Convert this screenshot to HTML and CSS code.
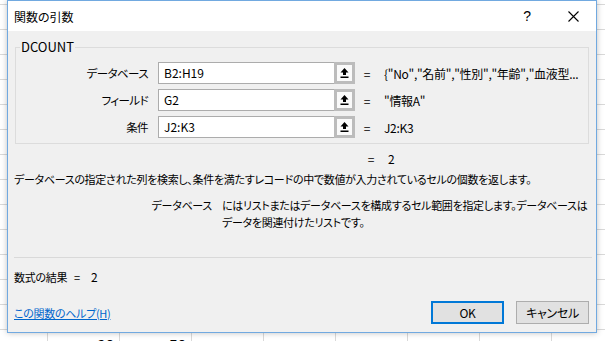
FILE: index.html
```html
<!DOCTYPE html>
<html lang="ja">
<head>
  <meta charset="UTF-8" />
  <title>関数の引数</title>
  <link rel="stylesheet" href="styles.css">
</head>
<body>

<div class="window">
  <div class="titlebar">
    <span class="title">関数の引数</span>
    <span class="caption-btn help">?</span>
    <span class="caption-btn close">
      <svg width="11" height="11" viewBox="0 0 11 11"><path d="M0.5 0.5 L10.5 10.5 M10.5 0.5 L0.5 10.5" stroke="#000" stroke-width="1.1" fill="none"/></svg>
    </span>
  </div>

  <div class="content">
    <fieldset class="args">
      <legend>DCOUNT</legend>

      <div class="arg-row">
        <label>データベース</label>
        <div class="ref-input">B2:H19</div>
        <span class="ref-btn"><svg width="9" height="10" viewBox="0 0 9 10"><path d="M4.5 0 L8.5 4.5 L6 4.5 L6 7 L3 7 L3 4.5 L0.5 4.5 Z M0.5 8.5 L8.5 8.5 L8.5 10 L0.5 10 Z" fill="#000"/></svg></span>
        <span class="eq">=</span>
        <span class="val">{"No","名前","性別","年齢","血液型...</span>
      </div>

      <div class="arg-row">
        <label>フィールド</label>
        <div class="ref-input">G2</div>
        <span class="ref-btn"><svg width="9" height="10" viewBox="0 0 9 10"><path d="M4.5 0 L8.5 4.5 L6 4.5 L6 7 L3 7 L3 4.5 L0.5 4.5 Z M0.5 8.5 L8.5 8.5 L8.5 10 L0.5 10 Z" fill="#000"/></svg></span>
        <span class="eq">=</span>
        <span class="val">"情報A"</span>
      </div>

      <div class="arg-row">
        <label>条件</label>
        <div class="ref-input">J2:K3</div>
        <span class="ref-btn"><svg width="9" height="10" viewBox="0 0 9 10"><path d="M4.5 0 L8.5 4.5 L6 4.5 L6 7 L3 7 L3 4.5 L0.5 4.5 Z M0.5 8.5 L8.5 8.5 L8.5 10 L0.5 10 Z" fill="#000"/></svg></span>
        <span class="eq">=</span>
        <span class="val">J2:K3</span>
      </div>
    </fieldset>

    <div class="total"><span class="eq">=</span><span class="val">2</span></div>

    <p class="desc">データベースの指定された列を検索し、条件を満たすレコードの中で数値が入力されているセルの個数を返します。</p>

    <div class="arg-help">
      <span class="arg-name">データベース</span>
      <span class="arg-text">にはリストまたはデータベースを構成するセル範囲を指定します。データベースは<br>データを関連付けたリストです。</span>
    </div>

    <hr class="sep">

    <div class="result">数式の結果<span class="result-eq">=</span><span class="result-val">2</span></div>

    <div class="footer">
      <a href="#" class="help-link">この関数のヘルプ(H)</a>
      <div class="buttons">
        <button class="btn ok">OK</button>
        <button class="btn">キャンセル</button>
      </div>
    </div>
  </div>
</div>

<div class="sheet-row">
  <span class="cell">90</span>
  <span class="cell">50</span>
  <span class="cell"></span>
  <span class="cell"></span>
  <span class="cell"></span>
  <span class="cell"></span>
  <span class="cell"></span>
</div>

</body>
</html>
```

FILE: styles.css
```css
body {
  margin: 0;
  height: 341px;
  overflow: hidden;
  font-family: "Noto Sans CJK JP", sans-serif;
  font-feature-settings: "palt";
  font-size: 11px;
  letter-spacing: -0.3px;
  color: #000;
  background:
    repeating-linear-gradient(to right, transparent 0 47px, #d9d9d9 47px 48px, transparent 48px 72px),
    repeating-linear-gradient(to bottom, #fff 0 4px, #d9d9d9 4px 5px, #fff 5px 25px);
}

.window {
  box-sizing: border-box;
  width: 590px;
  height: 333px;
  margin-left: 7px;
  border: 1px solid #71a9e0;
  background: #f0f0f0;
  box-shadow: 0 0 6px rgba(0, 0, 0, 0.25);
}

.titlebar {
  display: flex;
  align-items: center;
  height: 30px;
  background: #fff;
}

.title {
  flex: 1;
  padding-left: 6px;
  font-size: 12px;
  letter-spacing: 0;
}

.caption-btn {
  display: flex;
  align-items: center;
  justify-content: center;
  width: 46px;
  height: 30px;
  font-size: 14px;
  font-family: "Liberation Sans", sans-serif;
}

.content {
  padding: 0 4px 0 6px;
}

.args {
  margin: 8px 3px 0 1px;
  padding: 7px 0 5px 0;
  border: 1px solid #dcdcdc;
}

.args legend {
  margin-left: 4px;
  padding: 0 1px;
  font-size: 13px;
  letter-spacing: 0;
  line-height: 16px;
}

.arg-row {
  display: flex;
  align-items: center;
  height: 22px;
  margin-bottom: 5px;
  font-size: 12px;
}

.arg-row:last-child {
  margin-bottom: 0;
}

.arg-row label {
  width: 132px;
  margin-right: 10px;
  text-align: right;
  font-size: 11.5px;
  letter-spacing: -0.6px;
}

.ref-input {
  box-sizing: border-box;
  width: 177px;
  height: 22px;
  padding-left: 5px;
  line-height: 20px;
  letter-spacing: 0;
  border: 1px solid #acacac;
  background: #fff;
}

.ref-btn {
  box-sizing: border-box;
  display: flex;
  align-items: center;
  justify-content: center;
  width: 21px;
  height: 22px;
  margin-left: -1px;
  border: 3px solid #bcbcbc;
  background: #fafafa;
}

.eq {
  display: inline-block;
  width: 18px;
  margin-left: 3px;
  text-align: center;
}

.val {
  margin-left: 8px;
  white-space: nowrap;
}

.total {
  margin: 6px 0 0 345px;
  line-height: 17px;
  font-size: 12px;
}

.desc {
  margin: 4px 0 0;
  line-height: 17px;
  white-space: nowrap;
}

.arg-help {
  display: flex;
  margin-top: 9px;
  line-height: 17px;
}

.arg-name {
  width: 198px;
  flex: none;
  text-align: right;
  margin-right: 10px;
}

.arg-text {
  white-space: nowrap;
}

.sep {
  margin: 26px 0 0;
  border: none;
  border-top: 1px solid #d9d9d9;
}

.result {
  margin-top: 10px;
  line-height: 17px;
}

.result-eq {
  margin-left: 7px;
}

.result-val {
  margin-left: 11px;
  font-size: 12px;
}

.footer {
  display: flex;
  align-items: center;
  justify-content: space-between;
  margin-top: 15px;
}

.help-link {
  color: #0066cc;
  text-decoration: underline;
}

.buttons {
  display: flex;
  gap: 12px;
  margin-right: 3px;
}

.btn {
  box-sizing: border-box;
  width: 73px;
  height: 23px;
  padding: 0;
  font-family: inherit;
  font-feature-settings: "palt";
  font-size: 12px;
  letter-spacing: -0.3px;
  color: #000;
  background: #e1e1e1;
  border: 1px solid #adadad;
}

.btn.ok {
  border: 2px solid #0078d7;
}

.sheet-row {
  display: flex;
  height: 8px;
  overflow: hidden;
  padding-left: 48px;
}

.cell {
  box-sizing: border-box;
  width: 72px;
  padding: 4px 6px 0 0;
  text-align: right;
  font-family: "Liberation Sans", sans-serif;
  font-size: 15px;
  letter-spacing: 0;
  line-height: 16px;
}
```
